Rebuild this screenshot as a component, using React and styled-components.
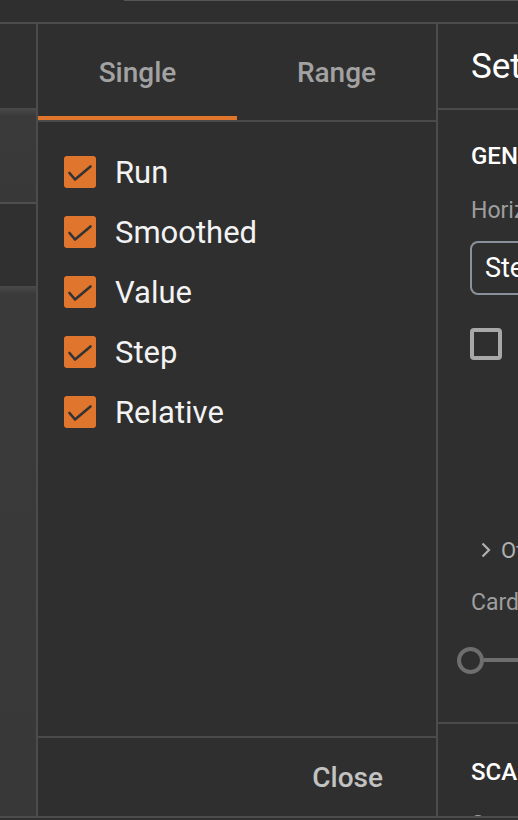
import React, { useState } from 'react';
import styled, { createGlobalStyle } from 'styled-components';

const GlobalStyle = createGlobalStyle`
  html, body {
    margin: 0;
    padding: 0;
    background: #2f2f2f;
    font-family: Roboto, "Liberation Sans", sans-serif;
  }
  * { box-sizing: border-box; }
`;

const Screen = styled.div`
  width: 518px;
  height: 820px;
  display: flex;
  flex-direction: column;
  overflow: hidden;
  background: #2f2f2f;
`;

const TopBar = styled.div`
  height: 24px;
  display: flex;
  border-bottom: 2px solid #4c4c4c;
`;

const TopEdge = styled.div`
  margin-left: 124px;
  flex: 1;
  border-top: 1px solid #565656;
`;

const Body = styled.div`
  height: 794px;
  display: flex;
  border-bottom: 2px solid #4c4c4c;
  overflow: hidden;
`;

const LeftStrip = styled.div`
  width: 38px;
  display: flex;
  flex-direction: column;
  border-right: 2px solid #4c4c4c;
`;

const StripBlock = styled.div`
  height: ${(p) => (p.$h ? `${p.$h}px` : 'auto')};
  flex: ${(p) => (p.$h ? 'none' : 1)};
  background: ${(p) =>
    p.$light ? 'linear-gradient(#4a4a4a 0, #3a3a3a 8px, #383838 100%)' : '#303030'};
  border-bottom: ${(p) => (p.$line ? '2px solid #4f4f4f' : 'none')};
`;

const Dialog = styled.div`
  width: 400px;
  display: flex;
  flex-direction: column;
  border-right: 2px solid #4c4c4c;
  background: #2f2f2f;
`;

const TabBar = styled.div`
  height: 98px;
  display: flex;
  border-bottom: 2px solid #4a4a4a;
`;

const Tab = styled.button`
  position: relative;
  flex: 1;
  background: none;
  border: none;
  padding: 0;
  font-family: Roboto, sans-serif;
  font-size: 28px;
  font-weight: 500;
  color: #a2a2a2;
  cursor: pointer;

  &::after {
    content: '';
    position: absolute;
    left: 0;
    right: 0;
    bottom: 0;
    height: 4px;
    background: ${(p) => (p.$active ? '#e0762c' : 'transparent')};
  }
`;

const List = styled.div`
  flex: 1;
  padding: 20px 0 0 26px;
  display: flex;
  flex-direction: column;
`;

const Row = styled.label`
  height: 60px;
  display: flex;
  align-items: center;
  gap: 19px;
  font-size: 31px;
  color: #f3f3f3;
  cursor: pointer;
`;

const Box = styled.span`
  width: 32px;
  height: 32px;
  border-radius: 3px;
  background: ${(p) => (p.$checked ? '#e0752d' : 'transparent')};
  border: ${(p) => (p.$checked ? 'none' : '4px solid #a8a8a8')};
  display: flex;
  align-items: center;
  justify-content: center;
  flex: none;
`;

const Footer = styled.div`
  height: 80px;
  border-top: 2px solid #4a4a4a;
  display: flex;
  align-items: center;
  justify-content: flex-end;
  padding-right: 37px;
`;

const TextButton = styled.button`
  background: none;
  border: none;
  padding: 8px 16px;
  font-family: Roboto, sans-serif;
  font-size: 28px;
  font-weight: 500;
  color: #c2c2c2;
  cursor: pointer;
`;

const Settings = styled.div`
  flex: 1;
  min-width: 0;
  display: flex;
  flex-direction: column;
  overflow: hidden;
  white-space: nowrap;
`;

const SettingsHeader = styled.div`
  height: 86px;
  flex: none;
  border-bottom: 2px solid #4a4a4a;
  display: flex;
  align-items: center;
  padding-left: 33px;
  font-size: 35px;
  color: #ffffff;
`;

const Section = styled.div`
  height: ${(p) => (p.$h ? `${p.$h}px` : 'auto')};
  flex: none;
  padding: ${(p) => p.$pt}px 0 0 32px;
  border-bottom: ${(p) => (p.$line ? '2px solid #4a4a4a' : 'none')};
  display: flex;
  flex-direction: column;
`;

const Line = styled.div`
  height: 32px;
  margin-top: ${(p) => p.$mt || 0}px;
  display: flex;
  align-items: center;
  gap: 10px;
  padding-left: ${(p) => p.$pl || 1}px;
  font-size: ${(p) => (p.$title ? 24 : p.$small ? 22 : 23)}px;
  font-weight: ${(p) => (p.$title ? 500 : 400)};
  color: ${(p) => (p.$title ? '#ffffff' : p.$small ? '#b0b0b0' : '#9e9e9e')};

  svg {
    flex: none;
  }
`;

const Select = styled.div`
  margin-top: 15px;
  height: 54px;
  width: 200px;
  border: 2px solid #89929a;
  border-radius: 8px;
  display: flex;
  align-items: center;
  padding-left: 13px;
  font-size: 27px;
  color: #ffffff;
`;

const CheckOutline = styled(Box)`
  margin-top: 33px;
  border-radius: 4px;
`;

const Slider = styled.div`
  margin: 28px 0 0 -13px;
  height: 28px;
  display: flex;
  align-items: center;
`;

const Thumb = styled.span`
  width: 27px;
  height: 27px;
  flex: none;
  border: 4px solid #6e6e6e;
  border-radius: 50%;
`;

const Track = styled.span`
  width: 200px;
  flex: none;
  height: 4px;
  background: #6e6e6e;
`;

const Check = () => (
  <svg width="32" height="32" viewBox="0 0 32 32">
    <polyline
      points="5.5,17 11,23.5 26.5,10.5"
      fill="none"
      stroke="#333"
      strokeWidth="2.6"
      strokeLinecap="round"
      strokeLinejoin="round"
    />
  </svg>
);

const Chevron = () => (
  <svg width="10" height="16" viewBox="0 0 10 16">
    <polyline points="1.5,1.5 8,8 1.5,14.5" fill="none" stroke="#b0b0b0" strokeWidth="2.2" />
  </svg>
);

const columns = ['Run', 'Smoothed', 'Value', 'Step', 'Relative'];

export default function App() {
  const [tab, setTab] = useState('single');
  const [checked, setChecked] = useState(columns);

  const toggle = (name) =>
    setChecked((c) => (c.includes(name) ? c.filter((n) => n !== name) : [...c, name]));

  return (
    <Screen>
      <GlobalStyle />
      <TopBar>
        <TopEdge />
      </TopBar>
      <Body>
        <LeftStrip>
          <StripBlock $h={84} />
          <StripBlock $h={96} $light $line />
          <StripBlock $h={82} />
          <StripBlock $light />
        </LeftStrip>

        <Dialog>
          <TabBar>
            <Tab $active={tab === 'single'} onClick={() => setTab('single')}>
              Single
            </Tab>
            <Tab $active={tab === 'range'} onClick={() => setTab('range')}>
              Range
            </Tab>
          </TabBar>
          <List>
            {columns.map((name) => (
              <Row key={name} onClick={() => toggle(name)}>
                <Box $checked={checked.includes(name)}>
                  {checked.includes(name) && <Check />}
                </Box>
                {name}
              </Row>
            ))}
          </List>
          <Footer>
            <TextButton>Close</TextButton>
          </Footer>
        </Dialog>

        <Settings>
          <SettingsHeader>Settings</SettingsHeader>
          <Section $h={614} $pt={30} $line>
            <Line $title>GENERAL</Line>
            <Line $mt={22}>Horizontal Axis</Line>
            <Select>Step</Select>
            <CheckOutline />
            <Line $mt={174} $small $pl={11}>
              <Chevron />
              Other
            </Line>
            <Line $mt={20}>Card Width</Line>
            <Slider>
              <Thumb />
              <Track />
            </Slider>
          </Section>
          <Section $pt={32}>
            <Line $title>SCALARS</Line>
            <Line $mt={20}>Smoothing</Line>
          </Section>
        </Settings>
      </Body>
    </Screen>
  );
}
